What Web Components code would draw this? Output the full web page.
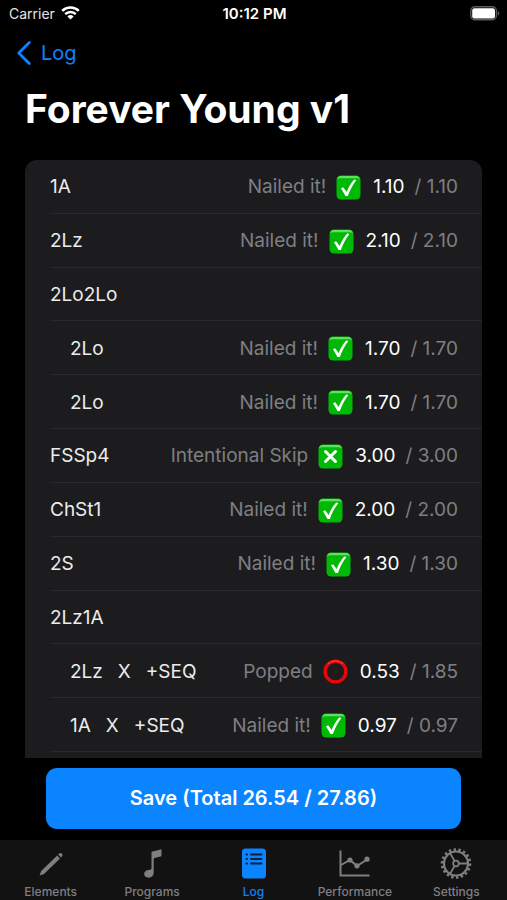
<!DOCTYPE html>
<html lang="en">
<head>
<meta charset="utf-8">
<meta name="viewport" content="width=device-width, initial-scale=1">
<title>Forever Young v1</title>
<style>
   body {
      margin: 0;
      background: #000;
      color: #fff;
      font-family: Inter, "Liberation Sans", sans-serif;
   }
</style>
</head>
<body>

<template id="app-screen">
   <style>
      :host {
         display: flex;
         flex-direction: column;
         height: 100vh;
         --accent: #0a84ff;
         --muted: #7f7f83;
         --card: #1c1c1e;
         --line: #29292b;
      }
      main {
         flex: 1;
         min-height: 0;
         display: flex;
         flex-direction: column;
      }
      h1 {
         margin: 0;
         padding: 11px 25px 26px;
         font-size: 39px;
         line-height: 50px;
         font-weight: 700;
      }
      footer {
         padding: 10px 46px 11px;
      }
   </style>
   <slot name="status"></slot>
   <slot name="nav"></slot>
   <main>
      <h1><slot name="title"></slot></h1>
      <slot></slot>
      <footer><slot name="action"></slot></footer>
   </main>
   <slot name="tabs"></slot>
</template>

<template id="status-bar">
   <style>
      :host {
         display: grid;
         grid-template-columns: 1fr auto 1fr;
         align-items: center;
         height: 28px;
         padding: 0 7px 0 9px;
         font-size: 14px;
         line-height: 18px;
      }
      .carrier {
         display: flex;
         align-items: center;
         gap: 6px;
         color: #e4e4e4;
      }
      .time {
         font-size: 15px;
         font-weight: 600;
      }
      .battery {
         justify-self: end;
      }
      svg {
         display: block;
      }
   </style>
   <div class="carrier">
      <slot></slot>
      <svg width="19" height="16" viewBox="0 0 19 16" fill="none" stroke="#fff" stroke-width="2.5">
         <path d="M1.2 4.9a12 12 0 0 1 16.6 0"/>
         <path d="M4.2 8.2a7.6 7.6 0 0 1 10.6 0"/>
         <path d="M9.5 13.6 6.4 10.4a4.6 4.6 0 0 1 6.2 0z" fill="#fff" stroke="none"/>
      </svg>
   </div>
   <div class="time"><slot name="time"></slot></div>
   <svg class="battery" width="30" height="16" viewBox="0 0 30 16">
      <rect x=".8" y=".8" width="25.6" height="13" rx="4" fill="none" stroke="#5c5c5e" stroke-width="1.4"/>
      <rect x="2.2" y="2.2" width="22.8" height="10.2" rx="2.2" fill="#fff"/>
      <path d="M27.8 5c2 .6 2 4 0 4.6z" fill="#5c5c5e"/>
   </svg>
</template>

<template id="nav-back">
   <style>
      :host {
         display: flex;
         height: 41px;
         padding: 0 17px;
         margin-top: 4px;
      }
      a {
         display: flex;
         align-items: center;
         gap: 10px;
         color: var(--accent);
         font-size: 20px;
         line-height: 26px;
         text-decoration: none;
      }
   </style>
   <a href="#log">
      <svg width="14" height="24" viewBox="0 0 14 24" fill="none" stroke="currentColor" stroke-width="2.8" stroke-linecap="round" stroke-linejoin="round">
         <path d="M12.3 1.6 1.8 12l10.5 10.4"/>
      </svg>
      <slot></slot>
   </a>
</template>

<template id="score-list">
   <style>
      :host {
         flex: 1;
         min-height: 0;
         display: grid;
         grid-auto-rows: minmax(48px, 1fr);
         overflow: hidden;
         margin: 0 25px;
         padding-bottom: 6px;
         border-radius: 12px 12px 0 0;
         background: var(--card);
      }
   </style>
   <slot></slot>
</template>

<template id="score-row">
   <style>
      :host {
         display: flex;
         align-items: center;
         margin-left: 25px;
         padding-top: 2px;
         padding-right: 24px;
         border-bottom: 1px solid var(--line);
         font-size: 19px;
         line-height: 26px;
         white-space: nowrap;
      }
      :host([nested]) .name {
         padding-left: 20px;
      }
      .name {
         flex: 1;
         display: flex;
         gap: 15px;
         color: #ececec;
      }
      .result {
         display: flex;
         align-items: center;
      }
      .result[hidden] {
         display: none;
      }
      .note, .base {
         color: var(--muted);
      }
      result-icon {
         margin: 0 12px 0 10px;
      }
      .base {
         margin-left: 10px;
      }
   </style>
   <div class="name"></div>
   <div class="result">
      <span class="note"></span>
      <result-icon></result-icon>
      <span class="score"></span>
      <span class="base"></span>
   </div>
</template>

<template id="result-icon">
   <style>
      :host {
         display: block;
      }
      svg {
         display: block;
      }
   </style>
   <svg width="25" height="25" viewBox="0 0 25 25" fill="none"></svg>
</template>

<template id="save-button">
   <style>
      :host {
         display: block;
      }
      button {
         display: block;
         width: 100%;
         padding: 18px;
         border: 0;
         border-radius: 11px;
         background: var(--accent);
         color: #fff;
         font: inherit;
         font-size: 20px;
         line-height: 25px;
         font-weight: 600;
      }
   </style>
   <button type="button"><slot></slot></button>
</template>

<template id="tab-bar">
   <style>
      :host {
         display: flex;
         box-sizing: border-box;
         height: 60px;
         background: #121212;
      }
   </style>
   <slot></slot>
</template>

<template id="tab-item">
   <style>
      :host {
         flex: 1;
         color: var(--muted);
      }
      :host([active]) {
         color: var(--accent);
      }
      a {
         display: flex;
         flex-direction: column;
         align-items: center;
         gap: 3px;
         padding-top: 7px;
         color: inherit;
         font-size: 12px;
         line-height: 16px;
         font-weight: 500;
         text-decoration: none;
      }
      svg {
         display: block;
      }
   </style>
   <a>
      <svg width="34" height="34" viewBox="0 0 34 34" fill="none" stroke="currentColor"></svg>
      <slot></slot>
   </a>
</template>

<app-screen>
   <status-bar slot="status">Carrier<span slot="time">10:12 PM</span></status-bar>
   <nav-back slot="nav">Log</nav-back>
   <span slot="title">Forever Young v1</span>
   <score-list>
      <score-row name="1A" note="Nailed it!" icon="check" score="1.10" base="1.10"></score-row>
      <score-row name="2Lz" note="Nailed it!" icon="check" score="2.10" base="2.10"></score-row>
      <score-row name="2Lo2Lo"></score-row>
      <score-row nested name="2Lo" note="Nailed it!" icon="check" score="1.70" base="1.70"></score-row>
      <score-row nested name="2Lo" note="Nailed it!" icon="check" score="1.70" base="1.70"></score-row>
      <score-row name="FSSp4" note="Intentional Skip" icon="cross" score="3.00" base="3.00"></score-row>
      <score-row name="ChSt1" note="Nailed it!" icon="check" score="2.00" base="2.00"></score-row>
      <score-row name="2S" note="Nailed it!" icon="check" score="1.30" base="1.30"></score-row>
      <score-row name="2Lz1A"></score-row>
      <score-row nested name="2Lz,X,+SEQ" note="Popped" icon="circle" score="0.53" base="1.85"></score-row>
      <score-row nested name="1A,X,+SEQ" note="Nailed it!" icon="check" score="0.97" base="0.97"></score-row>
   </score-list>
   <save-button slot="action">Save (Total 26.54 / 27.86)</save-button>
   <tab-bar slot="tabs">
      <tab-item icon="pencil" href="#elements">Elements</tab-item>
      <tab-item icon="note" href="#programs">Programs</tab-item>
      <tab-item icon="list" href="#log" active>Log</tab-item>
      <tab-item icon="chart" href="#performance">Performance</tab-item>
      <tab-item icon="gear" href="#settings">Settings</tab-item>
   </tab-bar>
</app-screen>

<script>
const tile = `
   <rect x=".5" y=".5" width="24" height="24" rx="4.5" fill="#00b906"/>
   <path d="M1.2 4.6C1.4 2.2 2.8 1 5 1h15c2.2 0 3.6 1.2 3.8 3.6-.8-1-2-1.4-3.8-1.4H5c-1.8 0-3 .4-3.8 1.4z" fill="#5fe05f"/>
`;

const resultIcons = {
   check: tile + `<path d="M5 13.2 7.2 12.2 10.6 17C12.6 11.8 15 8 18.2 4.4l2.2.6C16.6 10 13.9 15 11.9 21H9.5z" fill="#fff"/>`,
   cross: tile + `<path d="m7.5 7.5 10 10m0-10-10 10" stroke="#fff" stroke-width="3" stroke-linecap="round"/>`,
   circle: `
      <circle cx="12.5" cy="12.5" r="10.4" stroke="#e90808" stroke-width="3.4"/>
      <path d="M5 4.8a10.8 10.8 0 0 1 15 0" stroke="#ff4a3c" stroke-width="1"/>
   `,
};

const tabIcons = {
   pencil: `
      <path d="M5.6 28.6 7.2 24 23.2 8.6l2.8 2.8L10 27z" fill="currentColor" stroke="none"/>
      <path d="m24.2 7.6 1.1-1.1a2 2 0 0 1 2.8 2.8L27 10.4z" fill="currentColor" stroke="none"/>
   `,
   note: `
      <path d="M16.5 4.8 26.5 2.2v7l-7.8 2V25.5c0 3.4-2 5.2-5 5.2-2.7 0-4.5-1.4-4.5-3.6 0-2.2 1.6-3.5 4-4l2-.4c.9-.2 1.3-.5 1.3-1.4z" fill="currentColor" stroke="none"/>
   `,
   list: `
      <rect x="5" y="1.5" width="24" height="30" rx="3.5" fill="currentColor" stroke="none"/>
      <g stroke="#10233a" stroke-width="1.8" stroke-linecap="round">
         <path d="M14 7.5h10.5M14 12h10.5M14 16.5h10.5"/>
         <path d="M9.6 7.5h.4M9.6 12h.4M9.6 16.5h.4" stroke-width="2.2"/>
      </g>
   `,
   chart: `
      <path d="M2.5 3.5v25h29" stroke-width="2"/>
      <path d="M3 18 12 13l7 6L29 12.5" stroke-width="2"/>
      <g fill="currentColor" stroke="none">
         <circle cx="12" cy="13" r="2.6"/>
         <circle cx="19" cy="18.8" r="2.6"/>
         <circle cx="29" cy="12.2" r="2.6"/>
      </g>
   `,
   gear: `
      <circle cx="17" cy="16.5" r="12" stroke-width="2.2"/>
      <circle cx="17" cy="16.5" r="14" stroke-width="2.6" pathLength="36" stroke-dasharray="1 1"/>
      <circle cx="17" cy="16.5" r="2.8" stroke-width="1.8"/>
      <path d="M20 16.5h9M15.5 13.9 11 6.1M15.5 19.1 11 26.9" stroke-width="1.9"/>
   `,
};

class BaseElement extends HTMLElement {
   constructor() {
      super();
      this.attachShadow({ mode: 'open' });
      const template = document.getElementById(this.localName);
      this.shadowRoot.appendChild(template.content.cloneNode(true));
   }

   find(selector) {
      return this.shadowRoot.querySelector(selector);
   }
}

class AppScreen extends BaseElement {}
class StatusBar extends BaseElement {}
class NavBack extends BaseElement {}
class SaveButton extends BaseElement {}
class TabBar extends BaseElement {}

class ScoreList extends BaseElement {
   connectedCallback() {
      this.setAttribute('role', 'list');
   }
}

class ResultIcon extends BaseElement {
   static observedAttributes = ['name'];

   attributeChangedCallback(attr, prev, value) {
      this.find('svg').innerHTML = resultIcons[value] || '';
   }
}

class ScoreRow extends BaseElement {
   connectedCallback() {
      this.setAttribute('role', 'listitem');

      const parts = this.getAttribute('name').split(',').map((text) => {
         const span = document.createElement('span');
         span.textContent = text;
         return span;
      });
      this.find('.name').replaceChildren(...parts);

      // Combination headers have no score of their own
      if (!this.hasAttribute('score')) {
         this.find('.result').hidden = true;
         return;
      }
      this.find('.note').textContent = this.getAttribute('note');
      this.find('.score').textContent = this.getAttribute('score');
      this.find('.base').textContent = '/ ' + this.getAttribute('base');
      this.find('result-icon').setAttribute('name', this.getAttribute('icon'));
   }
}

class TabItem extends BaseElement {
   connectedCallback() {
      this.find('a').href = this.getAttribute('href');
      this.find('svg').innerHTML = tabIcons[this.getAttribute('icon')];
   }
}

customElements.define('result-icon', ResultIcon);
customElements.define('app-screen', AppScreen);
customElements.define('status-bar', StatusBar);
customElements.define('nav-back', NavBack);
customElements.define('score-list', ScoreList);
customElements.define('score-row', ScoreRow);
customElements.define('save-button', SaveButton);
customElements.define('tab-bar', TabBar);
customElements.define('tab-item', TabItem);
</script>
</body>
</html>
